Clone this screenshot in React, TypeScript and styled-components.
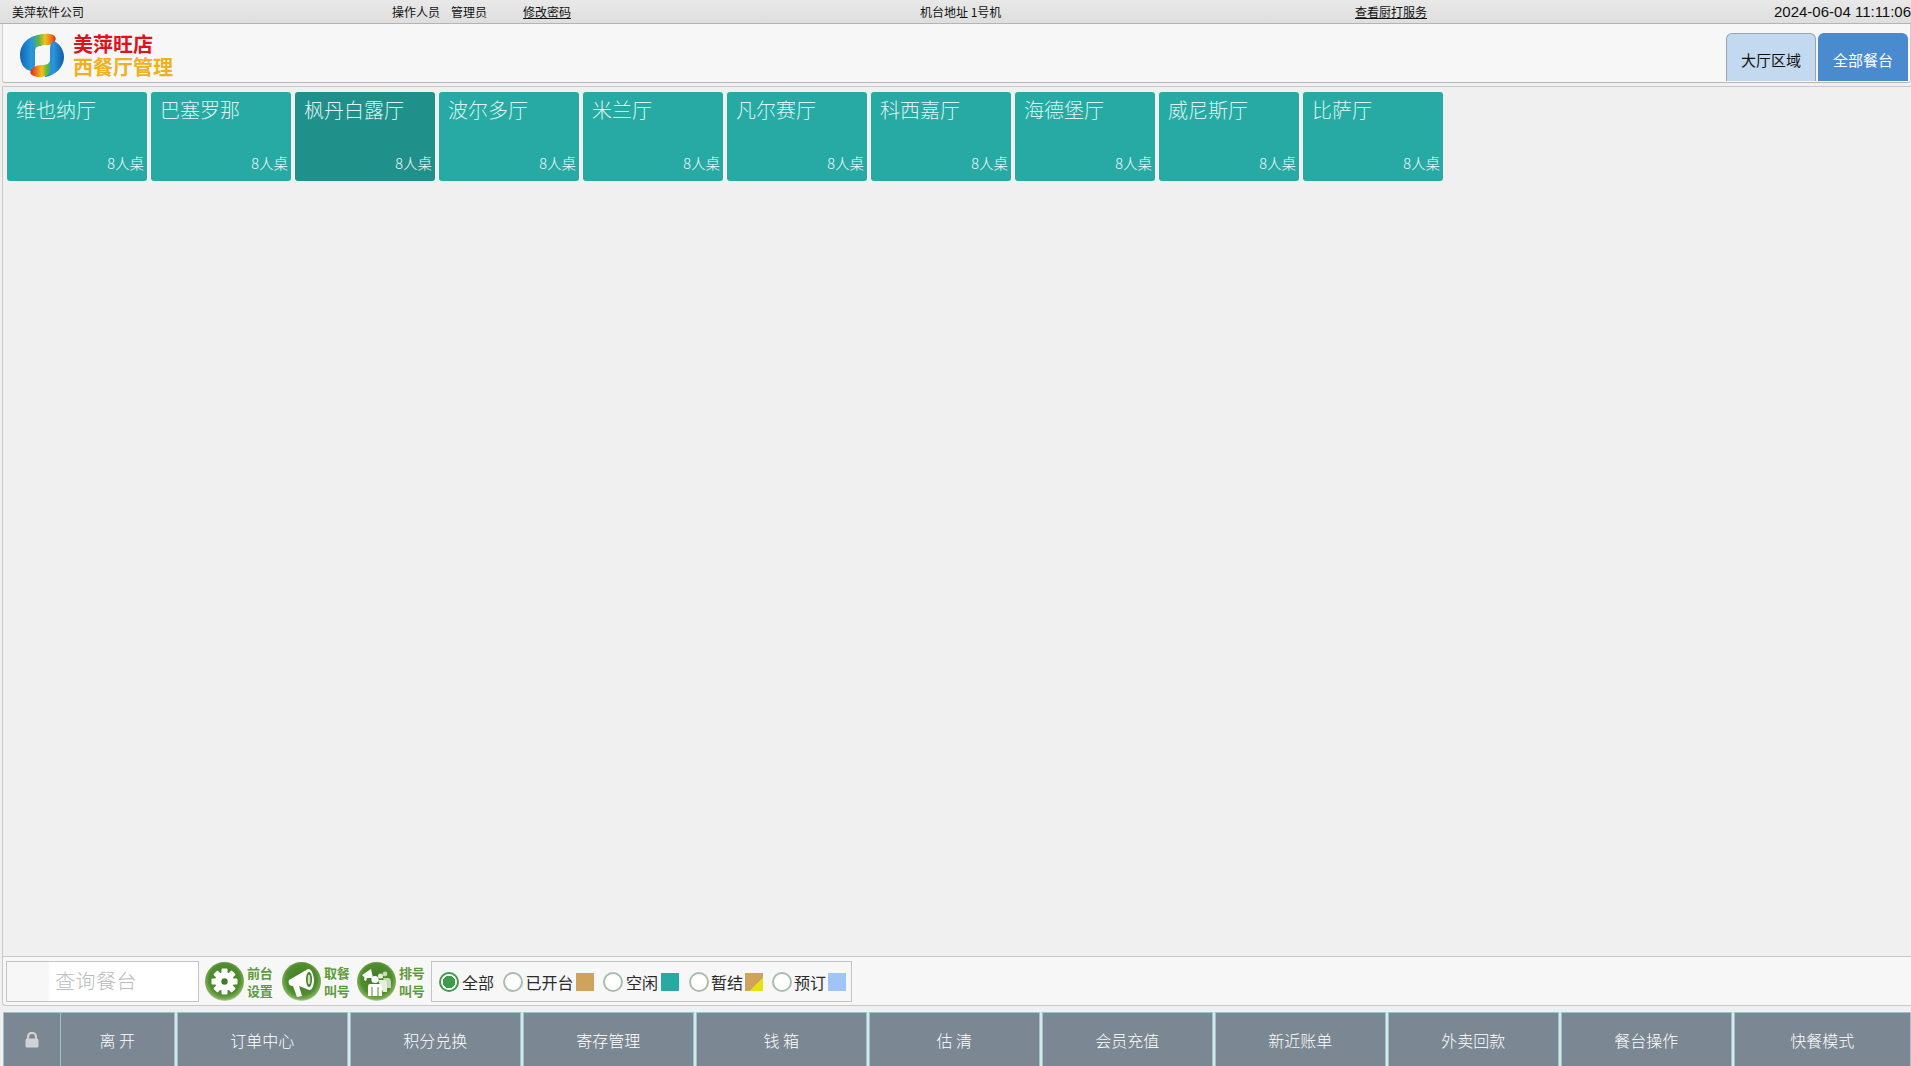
import styled, { createGlobalStyle } from 'styled-components'

const GlobalStyle = createGlobalStyle`
  html, body {
    margin: 0;
    padding: 0;
    height: 100%;
    overflow: hidden;
    background: #f0f0f0;
    font-family: "Noto Sans CJK SC", "Liberation Sans", sans-serif;
  }
  #root { height: 100%; }
`

const Page = styled.div`
  width: 1911px;
  height: 1066px;
  display: flex;
  flex-direction: column;
  overflow: hidden;
`

const TopBar = styled.div`
  height: 23px;
  flex: none;
  display: flex;
  align-items: center;
  background: linear-gradient(#e9e9e9, #dedede);
  border-bottom: 1px solid #b4b4b4;
  font-size: 12px;
  color: #111;
  white-space: nowrap;
`

const TopCell = styled.div<{ $w: number; $link?: boolean }>`
  width: ${(p) => p.$w}px;
  flex: none;
  text-decoration: ${(p) => (p.$link ? 'underline' : 'none')};
`

const Clock = styled.div`
  margin-left: auto;
  font-family: "Liberation Sans", sans-serif;
  font-size: 15px;
  width: 137px;
  flex: none;
`

const Header = styled.div`
  height: 59px;
  flex: none;
  box-sizing: border-box;
  margin: 0 0 3px 2px;
  display: flex;
  align-items: flex-end;
  justify-content: space-between;
  background: #f7f7f7;
  border: 1px solid #d0d0d0;
  border-top: none;
  border-bottom: 1px solid #b8b8b8;
  border-radius: 0 0 3px 3px;
`

const Logo = styled.div`
  display: flex;
  align-items: center;
  gap: 8px;
  padding: 0 0 3px 16px;
`

const LogoText = styled.div`
  display: flex;
  flex-direction: column;
  gap: 2px;
  padding-bottom: 2px;
  font-weight: 700;
  font-size: 20px;
  line-height: 21px;
`

const LogoLine = styled.div<{ $color: string }>`
  color: ${(p) => p.$color};
`

const Tabs = styled.div`
  display: flex;
  gap: 2px;
  padding: 0 2px 1px 0;
`

const Tab = styled.div<{ $active?: boolean }>`
  width: 90px;
  height: 48px;
  box-sizing: border-box;
  padding-top: 3px;
  display: flex;
  align-items: center;
  justify-content: center;
  font-size: 15px;
  border: 1px solid ${(p) => (p.$active ? '#4a8bd0' : '#9aa5b0')};
  border-bottom: none;
  border-radius: 6px 6px 0 0;
  background: ${(p) => (p.$active ? '#4a8bd0' : '#c3d9f0')};
  color: ${(p) => (p.$active ? '#fff' : '#111')};
`

const Main = styled.div`
  flex: 1;
  min-height: 0;
  margin-left: 2px;
  padding: 5px 4px;
  background: #f0f0f0;
  border-top: 1px solid #c8c8c8;
  border-left: 1px solid #c8c8c8;
  display: flex;
  align-items: flex-start;
  gap: 4px;
`

const Hall = styled.div<{ $selected?: boolean }>`
  width: 140px;
  height: 89px;
  flex: none;
  box-sizing: border-box;
  padding: 4px 3px 8px 9px;
  display: flex;
  flex-direction: column;
  justify-content: space-between;
  border-radius: 3px;
  color: #dff3f1;
  background: ${(p) => (p.$selected ? '#20908a' : '#27aaa3')};
`

const HallName = styled.div`
  font-size: 20px;
  line-height: 28px;
  font-weight: 300;
`

const HallSeats = styled.div`
  align-self: flex-end;
  font-size: 14.5px;
  line-height: 20px;
  font-weight: 300;
  color: #f2fbfa;
`

const Toolbar = styled.div`
  height: 50px;
  flex: none;
  box-sizing: border-box;
  margin-left: 2px;
  padding: 4px 0 0 3px;
  display: flex;
  align-items: flex-start;
  background: #f7f7f7;
  border: 1px solid #c8c8c8;
  border-right: none;
  border-radius: 0 0 0 4px;
`

const Search = styled.div`
  width: 193px;
  height: 41px;
  flex: none;
  box-sizing: border-box;
  padding-left: 42px;
  border: 1px solid #c4c4c4;
  background: #f7f7f7;
`

const SearchInput = styled.div`
  height: 100%;
  padding-left: 6px;
  background: #fff;
  font-size: 20px;
  line-height: 38px;
  letter-spacing: 0.5px;
  color: #bcbcbc;
  font-weight: 300;
`

const Tools = styled.div`
  display: flex;
  margin-left: 6px;
`

const Tool = styled.div<{ $w: number }>`
  width: ${(p) => p.$w}px;
  height: 41px;
  flex: none;
  display: flex;
  align-items: center;
  gap: 3px;
`

const ToolLabel = styled.div`
  font-size: 13px;
  line-height: 18px;
  font-weight: 700;
  color: #5f9a3a;
  white-space: pre-line;
  letter-spacing: -0.2px;
`

const DiscSvg = styled.svg`
  display: block;
  flex: none;
`

const Filters = styled.div`
  height: 41px;
  width: 421px;
  flex: none;
  box-sizing: border-box;
  padding-left: 7px;
  display: flex;
  align-items: center;
  border: 1px solid #c4c4c4;
  font-size: 16px;
  color: #2a2a2a;
`

const Filter = styled.div<{ $w: number; $gap: number }>`
  width: ${(p) => p.$w}px;
  flex: none;
  display: flex;
  align-items: center;
  gap: ${(p) => p.$gap}px;
`

const Radio = styled.span<{ $on?: boolean }>`
  width: 20px;
  height: 20px;
  flex: none;
  box-sizing: border-box;
  border-radius: 50%;
  border: 2px solid ${(p) => (p.$on ? '#3f9a4a' : '#a9bdaf')};
  background: ${(p) => (p.$on ? 'radial-gradient(circle, #3f9a4a 0 6px, #fff 6.5px)' : '#fff')};
`

const Swatch = styled.span<{ $bg: string }>`
  width: 18px;
  height: 18px;
  flex: none;
  background: ${(p) => p.$bg};
`

const NavStrip = styled.div`
  height: 6px;
  flex: none;
`

const Nav = styled.div`
  height: 54px;
  flex: none;
  margin-left: 3px;
  display: grid;
  grid-template-columns: 171.5px repeat(9, 170.5px) 176.5px;
  column-gap: 2.5px;
  background: #d6e8ea;
`

const NavGroup = styled.div`
  display: flex;
`

const NavLock = styled.div`
  width: 57px;
  flex: none;
  box-sizing: border-box;
  display: flex;
  align-items: center;
  justify-content: center;
  background: #7b8793;
  border: 1px solid #9fc3c8;
  border-bottom: none;
  border-right: none;
`

const NavItem = styled.div`
  flex: 1;
  display: flex;
  align-items: center;
  justify-content: center;
  box-sizing: border-box;
  background: #7b8793;
  color: #fff;
  font-size: 16px;
  font-weight: 300;
  border: 1px solid #9fc3c8;
  border-bottom: none;
  white-space: pre;
`

const halls = ['维也纳厅', '巴塞罗那', '枫丹白露厅', '波尔多厅', '米兰厅', '凡尔赛厅', '科西嘉厅', '海德堡厅', '威尼斯厅', '比萨厅']
const navItems = ['订单中心', '积分兑换', '寄存管理', '钱 箱', '估 清', '会员充值', '新近账单', '外卖回款', '餐台操作', '快餐模式']

const LogoMark = () => (
  <svg width="46" height="46" viewBox="0 0 46 46">
    <defs>
      <linearGradient id="blueL" x1="0" y1="0" x2="1" y2="0">
        <stop offset="0" stopColor="#1066b4" />
        <stop offset="0.55" stopColor="#2a98dc" />
        <stop offset="1" stopColor="#1878c4" />
      </linearGradient>
      <linearGradient id="blueR" x1="0" y1="0" x2="1" y2="0">
        <stop offset="0" stopColor="#1a7cc8" />
        <stop offset="0.5" stopColor="#2a96da" />
        <stop offset="1" stopColor="#0e5ca8" />
      </linearGradient>
      <linearGradient id="rainTop" x1="0" y1="0.5" x2="1" y2="0.5">
        <stop offset="0" stopColor="#2a9ad0" />
        <stop offset="0.3" stopColor="#62b63c" />
        <stop offset="0.55" stopColor="#eec41e" />
        <stop offset="0.8" stopColor="#ee7a1a" />
        <stop offset="1" stopColor="#d42a1a" />
      </linearGradient>
      <linearGradient id="rainBottom" x1="0" y1="0.5" x2="1" y2="0.5">
        <stop offset="0" stopColor="#d42a1a" />
        <stop offset="0.3" stopColor="#ee7a1a" />
        <stop offset="0.55" stopColor="#eec41e" />
        <stop offset="0.8" stopColor="#62b63c" />
        <stop offset="1" stopColor="#2a9ad0" />
      </linearGradient>
    </defs>
    <path d="M22 2 C10 2 1 11 1 22 C1 30 5 37 12 38 C15 38 16 34 16 31 L16 18 C16 14 18 13 22 13 Z" fill="url(#blueL)" />
    <path d="M13 5 C18 1 26 0 31 1 C36 2 38 5 36 8 C35 11 32 12 29 12 C25 12 20 12 16 15 C14 13 12 9 13 5 Z" fill="url(#rainTop)" />
    <path d="M35 8 C41 11 45 17 45 24 C45 34 36 43 26 44 L24 33 C28 33 31 31 31 27 L31 15 C31 12 33 9 35 8 Z" fill="url(#blueR)" />
    <path d="M12 37 C14 33 20 32 24 32 C27 32 30 31 31 28 C33 34 33 38 30 41 C25 45 17 45 13 42 C11 41 11 39 12 37 Z" fill="url(#rainBottom)" />
  </svg>
)

const GreenDisc = ({ children }: { children: React.ReactNode }) => (
  <DiscSvg width="39" height="39" viewBox="0 0 39 39">
    <defs>
      <radialGradient id="disc" cx="0.5" cy="0.45" r="0.55">
        <stop offset="0" stopColor="#3f7d24" />
        <stop offset="0.72" stopColor="#4f8d2e" />
        <stop offset="0.92" stopColor="#7fae5a" />
        <stop offset="1" stopColor="#c4dab0" />
      </radialGradient>
    </defs>
    <circle cx="19.5" cy="19.5" r="19.5" fill="url(#disc)" />
    {children}
  </DiscSvg>
)

const gearTeeth = [0, 45, 90, 135]

const GearIcon = () => (
  <GreenDisc>
    {gearTeeth.map((a) => (
      <rect key={a} x="16.5" y="6.5" width="6" height="26" rx="1" fill="#fff" transform={`rotate(${a} 19.5 19.5)`} />
    ))}
    <circle cx="19.5" cy="19.5" r="9.5" fill="#fff" />
    <circle cx="19.5" cy="19.5" r="3.2" fill="#3f7d24" />
  </GreenDisc>
)

const MegaphoneIcon = () => (
  <GreenDisc>
    <path d="M7 18 L26 7 C29 6 32 13 32 18 C32 23 30 29 27 28 L17 24 L20 34 L15 35 L11 24 C7 24 6 21 7 18 Z" fill="#fff" />
    <ellipse cx="27" cy="17.5" rx="3" ry="7.5" fill="#3f7d24" />
    <ellipse cx="27" cy="17.5" rx="1.4" ry="5" fill="#cfe0c0" />
  </GreenDisc>
)

const PeopleIcon = () => (
  <GreenDisc>
    <path d="M5 13 L14 7 L16 16 L10 16 L9 19 L7 18 L7.5 15.5 Z" fill="#fff" />
    <circle cx="28" cy="12" r="2.4" fill="#c6dab5" />
    <path d="M26 16 L32 16 Q34 17 34 20 L34 26 L30 26 Z" fill="#c6dab5" />
    <circle cx="23.5" cy="14" r="2.6" fill="#e6efdd" />
    <path d="M21 18 L28 18 Q30 19 30 22 L30 30 L26 30 Z" fill="#e6efdd" />
    <circle cx="18" cy="17.5" r="3.6" fill="#fff" />
    <path d="M13 22 L23 22 Q25 22 25 25 L25 34 L21.5 34 L21.5 25 L20.5 25 L20.5 34 L15.5 34 L15.5 25 L14.5 25 L14.5 34 L11 34 L11 25 Q11 22 13 22 Z" fill="#fff" />
  </GreenDisc>
)

const LockIcon = () => (
  <svg width="14" height="16" viewBox="0 0 14 16">
    <path d="M3 7 V5 C3 -0.5 11 -0.5 11 5 V7" fill="none" stroke="#d2d2d2" strokeWidth="2.2" />
    <rect x="0.5" y="6.5" width="13" height="9" rx="1.5" fill="#d2d2d2" />
  </svg>
)

export default function App() {
  return (
    <Page>
      <GlobalStyle />
      <TopBar>
        <TopCell $w={12} />
        <TopCell $w={380}>美萍软件公司</TopCell>
        <TopCell $w={59}>操作人员</TopCell>
        <TopCell $w={72}>管理员</TopCell>
        <TopCell $w={397} $link>修改密码</TopCell>
        <TopCell $w={435}>机台地址 1号机</TopCell>
        <TopCell $w={100} $link>查看厨打服务</TopCell>
        <Clock>2024-06-04 11:11:06</Clock>
      </TopBar>
      <Header>
        <Logo>
          <LogoMark />
          <LogoText>
            <LogoLine $color="#e0101c">美萍旺店</LogoLine>
            <LogoLine $color="#f0b020">西餐厅管理</LogoLine>
          </LogoText>
        </Logo>
        <Tabs>
          <Tab>大厅区域</Tab>
          <Tab $active>全部餐台</Tab>
        </Tabs>
      </Header>
      <Main>
        {halls.map((name, i) => (
          <Hall key={name} $selected={i === 2}>
            <HallName>{name}</HallName>
            <HallSeats>8人桌</HallSeats>
          </Hall>
        ))}
      </Main>
      <Toolbar>
        <Search>
          <SearchInput>查询餐台</SearchInput>
        </Search>
        <Tools>
          <Tool $w={77}>
            <GearIcon />
            <ToolLabel>{'前台\n设置'}</ToolLabel>
          </Tool>
          <Tool $w={75}>
            <MegaphoneIcon />
            <ToolLabel>{'取餐\n叫号'}</ToolLabel>
          </Tool>
          <Tool $w={74}>
            <PeopleIcon />
            <ToolLabel>{'排号\n叫号'}</ToolLabel>
          </Tool>
        </Tools>
        <Filters>
          <Filter $w={64} $gap={3}>
            <Radio $on />
            全部
          </Filter>
          <Filter $w={100} $gap={2.5}>
            <Radio />
            已开台
            <Swatch $bg="#cfa45a" />
          </Filter>
          <Filter $w={86} $gap={3}>
            <Radio />
            空闲
            <Swatch $bg="#27aaa3" />
          </Filter>
          <Filter $w={83} $gap={2}>
            <Radio />
            暂结
            <Swatch $bg="linear-gradient(135deg, #cfa45a 0 62%, #e6e014 62%)" />
          </Filter>
          <Filter $w={80} $gap={2}>
            <Radio />
            预订
            <Swatch $bg="#a0c4f5" />
          </Filter>
        </Filters>
      </Toolbar>
      <NavStrip />
      <Nav>
        <NavGroup>
          <NavLock>
            <LockIcon />
          </NavLock>
          <NavItem>离 开</NavItem>
        </NavGroup>
        {navItems.map((label) => (
          <NavItem key={label}>{label}</NavItem>
        ))}
      </Nav>
    </Page>
  )
}
